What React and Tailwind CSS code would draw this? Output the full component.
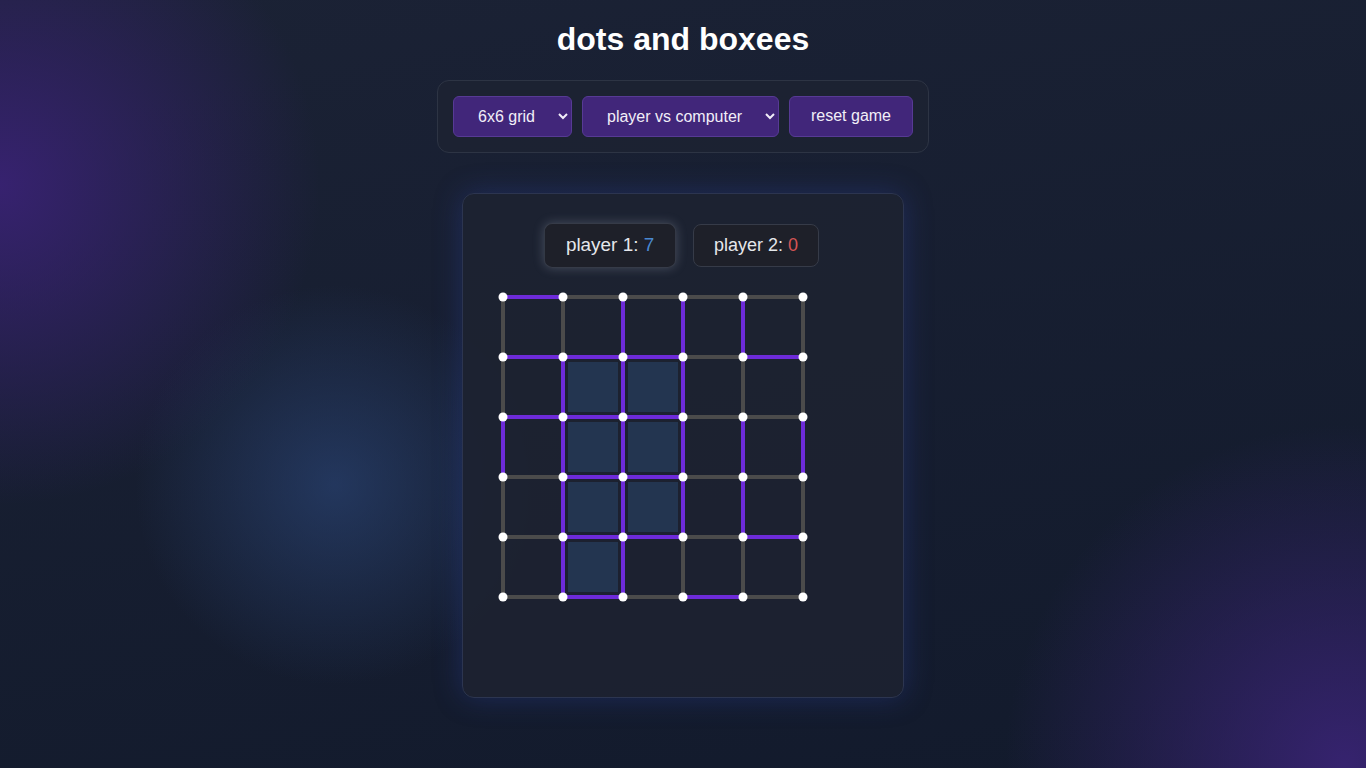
import { useState } from 'react'

const SIZE = 6
const GAP = 60
const OFF = 20

// which lines are taken: 'p' = purple (drawn), '.' = empty
const H_LINES = ['p....', 'ppp.p', 'ppp..', '.pp..', '.pp.p', '.p.p.']
const V_LINES = ['..ppp.', '.ppp..', 'pppppp', '.pppp.', '.pp...']
const BOXES = [[1, 1], [2, 1], [1, 2], [2, 2], [1, 3], [2, 3], [1, 4]]

function Board() {
  const px = (i) => OFF + i * GAP
  return (
    <svg width="340" height="340" className="block">
      {BOXES.map(([c, r]) => (
        <rect key={`b${c}${r}`} x={px(c) + 5} y={px(r) + 5} width={GAP - 10} height={GAP - 10} fill="#233550" />
      ))}
      {H_LINES.map((row, r) =>
        row.split('').map((v, c) => (
          <line
            key={`h${r}${c}`}
            x1={px(c)} y1={px(r)} x2={px(c + 1)} y2={px(r)}
            stroke={v === 'p' ? '#6d2bd9' : '#4b4b4b'}
            strokeWidth="4"
          />
        ))
      )}
      {V_LINES.map((row, r) =>
        row.split('').map((v, c) => (
          <line
            key={`v${r}${c}`}
            x1={px(c)} y1={px(r)} x2={px(c)} y2={px(r + 1)}
            stroke={v === 'p' ? '#6d2bd9' : '#4b4b4b'}
            strokeWidth="4"
          />
        ))
      )}
      {Array.from({ length: SIZE }).map((_, r) =>
        Array.from({ length: SIZE }).map((_, c) => (
          <circle key={`d${r}${c}`} cx={px(c)} cy={px(r)} r="4.5" fill="#ffffff" />
        ))
      )}
    </svg>
  )
}

export default function App() {
  const [grid, setGrid] = useState('6')
  const [mode, setMode] = useState('pvc')

  return (
    <div
      className="min-h-screen w-full flex flex-col items-center pt-5 font-['Liberation_Sans',Arial,sans-serif] text-white bg-[radial-gradient(circle_320px_at_0px_185px,rgba(58,34,118,0.9),rgba(58,34,118,0)),radial-gradient(circle_340px_at_1345px_765px,rgba(58,36,118,0.9),rgba(58,36,118,0)),radial-gradient(circle_200px_at_335px_485px,rgba(44,72,124,0.6),rgba(44,72,124,0)),linear-gradient(170deg,#1b2235,#121a2c)]"
    >
      {/* Title */}
      <h1 className="text-[32px] leading-[38px] font-bold">dots and boxees</h1>

      {/* Controls */}
      <div className="mt-[22px] flex gap-[10px] p-[15px] rounded-xl border border-[#2d3444] bg-[#1d2332]/80">
        <select
          value={grid}
          onChange={(e) => setGrid(e.target.value)}
          className="w-[119px] h-[41px] pl-5 pr-[6px] text-base rounded-md border border-[#573a95] bg-[#41267a] text-[#f1eef8] outline-none"
        >
          <option value="4">4x4 grid</option>
          <option value="5">5x5 grid</option>
          <option value="6">6x6 grid</option>
        </select>
        <select
          value={mode}
          onChange={(e) => setMode(e.target.value)}
          className="w-[197px] h-[41px] pl-5 pr-[6px] text-base rounded-md border border-[#573a95] bg-[#41267a] text-[#f1eef8] outline-none"
        >
          <option value="pvp">player vs player</option>
          <option value="pvc">player vs computer</option>
        </select>
        <button className="w-[124px] h-[41px] pb-px text-base rounded-md border border-[#573a95] bg-[#41267a] text-[#f1eef8]">
          reset game
        </button>
      </div>

      {/* Board panel */}
      <div className="mt-10 w-[442px] h-[505px] rounded-xl border border-[#2c3550] bg-[#1d2231]/90 shadow-[0_0_28px_rgba(45,70,170,0.35)] px-5 pt-[30px]">
        <div className="flex justify-center gap-5">
          <div className="scale-105 px-5 py-[10px] leading-[21px] text-lg rounded-lg border border-[#363b48] bg-[#1e2029] text-[#e5e7eb] shadow-[0_0_10px_rgba(200,210,230,0.25)]">
            player 1: <span className="text-[#4a88cf]">7</span>
          </div>
          <div className="px-5 py-[10px] leading-[21px] text-lg rounded-lg border border-[#363b48] bg-[#1e2029] text-[#e5e7eb]">
            player 2: <span className="text-[#d45555]">0</span>
          </div>
        </div>
        <div className="mt-[10px]">
          <Board />
        </div>
      </div>
    </div>
  )
}
